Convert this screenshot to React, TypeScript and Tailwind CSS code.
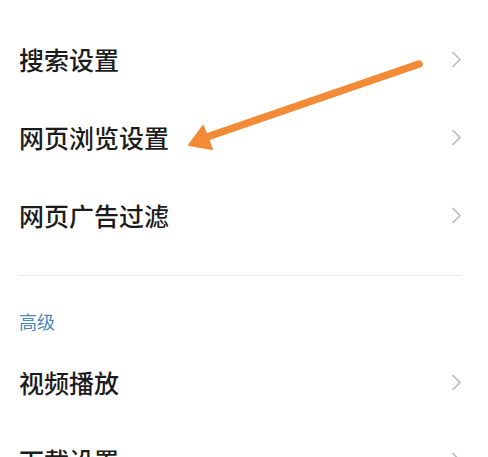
import React from 'react';

const GROUPS = [
  { title: null, items: ['搜索设置', '网页浏览设置', '网页广告过滤'] },
  { title: '高级', items: ['视频播放', '下载设置'] },
];

function Chevron() {
  return (
    <svg width="11" height="17" viewBox="0 0 11 17" fill="none" className="shrink-0">
      <path d="M2 1.5 L9 8.5 L2 15.5" stroke="#bdbdbd" strokeWidth="1.7" strokeLinecap="round" strokeLinejoin="round" />
    </svg>
  );
}

function Row({ label }: { label: string }) {
  return (
    <div className="flex h-[78px] items-center justify-between pl-[19px] pr-[26px]">
      <span className="text-[25px] leading-none font-medium text-[#1c1c1c]">{label}</span>
      <Chevron />
    </div>
  );
}

export default function App() {
  return (
    <div
      className="relative h-[457px] w-[488px] overflow-hidden bg-white"
      style={{ fontFamily: '"Noto Sans CJK SC", "Noto Sans", sans-serif' }}
    >
      <div className="pt-[20px]">
        {GROUPS[0].items.map((it) => (
          <Row key={it} label={it} />
        ))}
      </div>

      <div className="ml-[18px] mr-[26px] mt-[21px] h-px bg-[#ececec]" />

      <div className="pl-[19px] pt-[34px] pb-[11px] text-[18px] leading-[22px] text-[#4a88b8]">高级</div>

      <div>
        {GROUPS[1].items.map((it) => (
          <Row key={it} label={it} />
        ))}
      </div>

      {/* annotation arrow drawn over the list */}
      <svg className="pointer-events-none absolute left-0 top-0" width="488" height="457" viewBox="0 0 488 457">
        <line x1="419" y1="64" x2="204" y2="138" stroke="#f28a36" strokeWidth="7.5" strokeLinecap="round" />
        <polygon points="189,145 203,126 212,149" fill="#f28a36" stroke="#f28a36" strokeWidth="2" strokeLinejoin="round" />
      </svg>
    </div>
  );
}
